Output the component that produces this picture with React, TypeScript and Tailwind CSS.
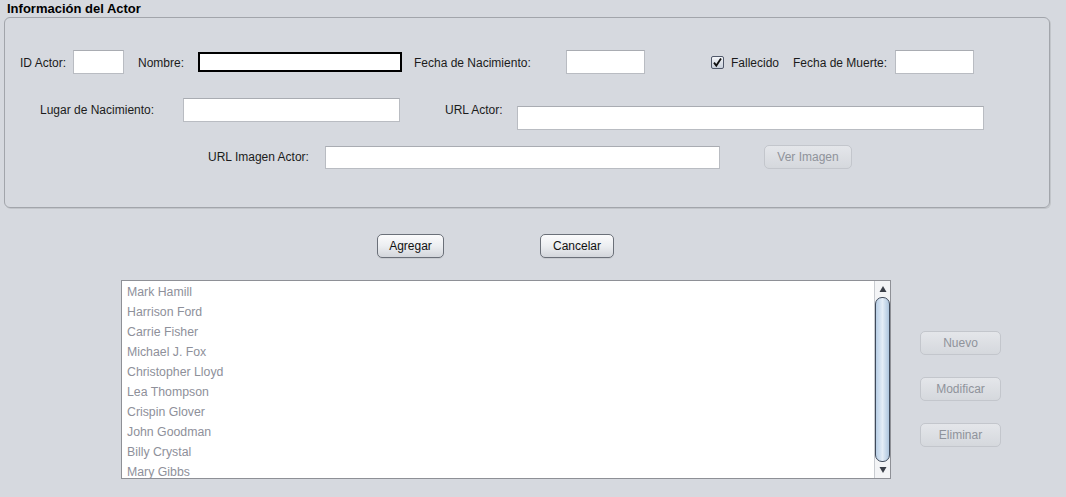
import React from 'react';

const ACTORS = [
  'Mark Hamill',
  'Harrison Ford',
  'Carrie Fisher',
  'Michael J. Fox',
  'Christopher Lloyd',
  'Lea Thompson',
  'Crispin Glover',
  'John Goodman',
  'Billy Crystal',
  'Mary Gibbs',
];

function Field({ w, h = 24, className = '' }: { w: string; h?: string | number; className?: string }) {
  return (
    <div
      className={`${w} ${h === 20 ? 'h-[20px]' : h === 23 ? 'h-[23px]' : 'h-[24px]'} shrink-0 bg-white border border-[#b9bcc2] border-t-[#a9acb2] ${className}`}
    />
  );
}

function Btn({ label, w, disabled = false }: { label: string; w: string; disabled?: boolean }) {
  return (
    <div
      className={`${w} h-[24px] shrink-0 flex items-center justify-center rounded-[5px] border text-[12px] ${
        disabled
          ? 'border-[#c3c6cc] bg-gradient-to-b from-[#e4e6ea] to-[#d5d8dd] text-[#8f939b]'
          : 'border-[#6b7079] bg-gradient-to-b from-[#fbfbfc] via-[#eceef1] to-[#d3d6db] text-[#111] shadow-[0_1px_0_#c8cbd0]'
      }`}
    >
      {label}
    </div>
  );
}

function Label({ text, w, className = '' }: { text: string; w: string; className?: string }) {
  return <div className={`${w} shrink-0 whitespace-nowrap ${className}`}>{text}</div>;
}

export default function App() {
  return (
    <div className="w-[1066px] h-[497px] overflow-hidden bg-[#d6d9df] text-[12px] text-[#1b1b1b] font-['Liberation_Sans',Arial,sans-serif]">
      <div className="pl-[7px] pt-[2px] h-[17px] leading-[14px] font-bold text-[13px] text-black">
        Información del Actor
      </div>

      <div className="ml-[4px] w-[1046px] h-[191px] rounded-[6px] border border-[#a2a5ab] shadow-[1px_1px_0_#c2c5ca]">
        {/* row 1 */}
        <div className="mt-[32px] h-[24px] flex items-center pl-[15px]">
          <Label text="ID Actor:" w="w-[53px]" className="pt-[1px]" />
          <Field w="w-[51px]" />
          <Label text="Nombre:" w="w-[60px]" className="ml-[14px] pt-[1px]" />
          <div className="w-[204px] h-[20px] shrink-0 bg-white border-2 border-black" />
          <Label text="Fecha de Nacimiento:" w="w-[152px]" className="ml-[12px] pt-[1px]" />
          <Field w="w-[79px]" />
          <div className="ml-[66px] w-[13px] h-[13px] shrink-0 rounded-[2px] border border-[#50586a] bg-gradient-to-b from-[#f4f6f9] to-[#c9d0db] flex items-center justify-center">
            <svg width="11" height="11" viewBox="0 0 11 11">
              <path d="M2 5.6 L4.3 8.6 L9 1.6" fill="none" stroke="#111" strokeWidth="1.8" />
            </svg>
          </div>
          <Label text="Fallecido" w="w-[62px]" className="ml-[7px] pt-[1px]" />
          <Label text="Fecha de Muerte:" w="w-[102px]" className="pt-[1px]" />
          <Field w="w-[79px]" />
        </div>

        {/* row 2 */}
        <div className="mt-[24px] h-[32px] flex items-start pl-[35px]">
          <Label text="Lugar de Nacimiento:" w="w-[143px]" className="leading-[24px]" />
          <Field w="w-[217px]" />
          <Label text="URL Actor:" w="w-[72px]" className="ml-[45px] leading-[24px]" />
          <Field w="w-[467px]" className="mt-[8px]" />
        </div>

        {/* row 3 */}
        <div className="mt-[15px] h-[24px] flex items-center pl-[203px]">
          <Label text="URL Imagen Actor:" w="w-[117px]" />
          <Field w="w-[395px]" h={23} />
          <div className="ml-[44px]">
            <Btn label="Ver Imagen" w="w-[88px]" disabled />
          </div>
        </div>
      </div>

      <div className="mt-[26px] flex pl-[377px] gap-[96px]">
        <Btn label="Agregar" w="w-[67px]" />
        <Btn label="Cancelar" w="w-[74px]" />
      </div>

      <div className="mt-[22px] flex pl-[121px]">
        <div className="w-[770px] h-[199px] shrink-0 border border-[#8e9096] bg-white flex overflow-hidden">
          <div className="flex-1 pl-[5px] pt-[1px]">
            {ACTORS.map((a) => (
              <div key={a} className="h-[20px] leading-[20px] text-[12.3px] text-[#8e909a] whitespace-nowrap">
                {a}
              </div>
            ))}
          </div>
          <div className="w-[16px] h-full border-l border-[#c9ccd1] bg-[#f3f4f6] flex flex-col">
            <div className="h-[16px] flex items-center justify-center">
              <svg width="8" height="8" viewBox="0 0 8 8">
                <path d="M4 1 L7.5 7 L0.5 7 Z" fill="#3a3f48" />
              </svg>
            </div>
            <div className="flex-1 rounded-[7px] border border-[#404a5a] bg-gradient-to-r from-[#b9cfe6] via-[#e4edf7] to-[#aec6df]" />
            <div className="h-[16px] flex items-center justify-center">
              <svg width="8" height="8" viewBox="0 0 8 8">
                <path d="M0.5 1 L7.5 1 L4 7 Z" fill="#3a3f48" />
              </svg>
            </div>
          </div>
        </div>

        <div className="ml-[29px] pt-[51px] flex flex-col gap-[22px]">
          <Btn label="Nuevo" w="w-[81px]" disabled />
          <Btn label="Modificar" w="w-[81px]" disabled />
          <Btn label="Eliminar" w="w-[81px]" disabled />
        </div>
      </div>
    </div>
  );
}
